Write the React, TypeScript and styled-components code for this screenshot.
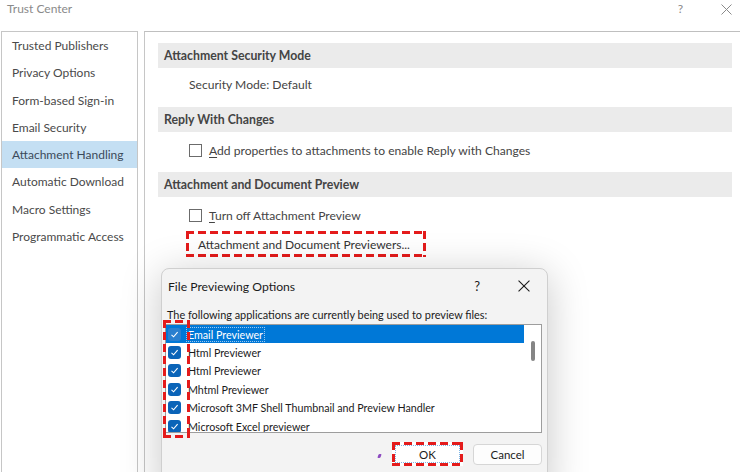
import React from 'react'
import styled, { createGlobalStyle, css } from 'styled-components'

const GlobalStyle = createGlobalStyle`
  html, body {
    margin: 0;
    height: 100%;
    overflow: hidden;
    background: #ffffff;
  }
  body {
    font-family: Lato, "Open Sans", "Liberation Sans", sans-serif;
    color: #444444;
  }
  * { box-sizing: border-box; }
`

// red annotation frame, drawn as long dashes like the marker in the screenshot
const redDashes = css`
  background-image:
    repeating-linear-gradient(90deg, #e41b1b 0 8px, transparent 8px 12px),
    repeating-linear-gradient(90deg, #e41b1b 0 8px, transparent 8px 12px),
    repeating-linear-gradient(180deg, #e41b1b 0 8px, transparent 8px 12px),
    repeating-linear-gradient(180deg, #e41b1b 0 8px, transparent 8px 12px);
  background-size: 100% 3px, 100% 3px, 3px 100%, 3px 100%;
  background-position: left top, left bottom, left top, right top;
  background-repeat: no-repeat;
`

const Window = styled.div`
  position: relative;
  width: 740px;
  height: 472px;
  overflow: hidden;
  display: flex;
  flex-direction: column;
`

const TitleBar = styled.div`
  height: 31px;
  display: flex;
  align-items: flex-start;
  padding: 0 8px 0 7px;
  line-height: 18px;
  font-size: 12px;
  color: #8a8a8a;
`

const TitleText = styled.span`
  flex: 1;
`

const TitleIcons = styled.div`
  display: flex;
  gap: 38px;
  align-items: center;
  height: 18px;
  color: #8a8a8a;
  font-size: 12px;
`

const Body = styled.div`
  flex: 1;
  display: flex;
  gap: 6px;
  padding-left: 1px;
  min-height: 0;
`

const Nav = styled.ul`
  width: 137px;
  margin: 0;
  padding: 0;
  list-style: none;
  border: 1px solid #c6c6c6;
  border-bottom: none;
`

const NavItem = styled.li<{ $active?: boolean }>`
  height: 27.3px;
  line-height: 27.3px;
  padding-left: 10px;
  font-size: 12px;
  white-space: nowrap;
  color: ${p => (p.$active ? '#3b4a5a' : '#4a4a4a')};
  background: ${p => (p.$active ? '#c4dff3' : 'transparent')};
`

const Panel = styled.div`
  flex: 1;
  border-top: 1px solid #bfbfbf;
  border-left: 1px solid #c6c6c6;
  padding: 11px 8px 0 13px;
`

const SectionBar = styled.div`
  height: 25px;
  line-height: 25px;
  padding-left: 6px;
  background: #ebebeb;
  font-size: 12.3px;
  font-weight: 700;
  color: #444444;
`

const SectionBody = styled.div`
  padding: 10px 0 15px 31px;
  display: flex;
  flex-direction: column;
  align-items: flex-start;
  gap: 10px;
`

const InfoText = styled.div`
  font-size: 12.1px;
  line-height: 14px;
  color: #444444;
`

const CheckRow = styled.label`
  display: flex;
  align-items: center;
  gap: 7px;
  height: 14px;
  margin-top: 1px;
  font-size: 12.1px;
  color: #444444;
`

const Box = styled.span`
  width: 13px;
  height: 13px;
  border: 1px solid #6b6b6b;
  background: #ffffff;
  display: inline-block;
`

const Key = styled.span`
  text-decoration: underline;
  text-underline-offset: 2px;
`

const AnnotatedButton = styled.div`
  ${redDashes};
  margin-left: -3px;
  margin-top: -1px;
  height: 26px;
  padding: 0 16px 0 12px;
  display: flex;
  align-items: center;
  font-size: 12px;
  color: #333333;
`

/* dialog overlay */
const Dialog = styled.div`
  position: absolute;
  left: 161px;
  top: 268px;
  width: 387px;
  height: 230px;
  background: #f3f3f3;
  border: 1px solid #cfcfcf;
  border-radius: 8px;
  box-shadow: 0 6px 40px rgba(0, 0, 0, 0.22);
  display: flex;
  flex-direction: column;
`

const DialogHeader = styled.div`
  height: 34px;
  display: flex;
  align-items: center;
  padding: 0 17px 0 6px;
  font-size: 12.2px;
  color: #1b1b1b;
`

const DialogTitle = styled.span`
  flex: 1;
`

const DialogIcons = styled.div`
  display: flex;
  align-items: center;
  gap: 38px;
  color: #1b1b1b;
  font-size: 13px;
`

const Prompt = styled.div`
  padding: 5px 0 0 5px;
  height: 21px;
  font-size: 10.9px;
  line-height: 14px;
  color: #1b1b1b;
`

const ListBox = styled.div`
  margin: 0 5px 0 3px;
  height: 109px;
  border: 1px solid #9d9d9d;
  background: #ffffff;
  display: flex;
  overflow: hidden;
`

const Rows = styled.div`
  flex: 1;
  display: flex;
  flex-direction: column;
`

const Row = styled.div<{ $selected?: boolean }>`
  flex: none;
  height: 18.4px;
  display: flex;
  align-items: center;
  gap: 6px;
  padding-left: 2px;
  font-size: 10.7px;
  white-space: nowrap;
  color: ${p => (p.$selected ? '#ffffff' : '#1b1b1b')};
  background: ${p => (p.$selected ? '#0078d7' : 'transparent')};
`

const RowLabel = styled.span<{ $focus?: boolean }>`
  padding: 0 1px;
  outline: ${p => (p.$focus ? '1px dotted #9cc8f0' : 'none')};
`

const BlueBox = styled.span<{ $faded?: boolean }>`
  width: 13px;
  height: 13px;
  border-radius: 3px;
  background: ${p => (p.$faded ? '#2a7fcf' : '#0a64b8')};
  display: inline-flex;
  align-items: center;
  justify-content: center;
  flex: none;
`

const ScrollTrack = styled.div`
  width: 17px;
  display: flex;
  justify-content: center;
  padding-top: 16px;
`

const Thumb = styled.div`
  width: 4px;
  height: 20px;
  border-radius: 2px;
  background: #858585;
`

const Footer = styled.div`
  display: flex;
  justify-content: flex-end;
  align-items: center;
  gap: 10px;
  padding: 8px 5px 0 0;
  height: 34px;
`

const Cursor = styled.span`
  width: 3px;
  height: 4px;
  background: #8d4bc0;
  border-radius: 1px;
  margin-right: 1px;
  transform: translateY(2px) skewX(-20deg);
`

const OkButton = styled.div`
  ${redDashes};
  background-color: #ffffff;
  width: 71px;
  height: 24px;
  display: flex;
  align-items: center;
  justify-content: center;
  font-size: 11.5px;
  color: #1b1b1b;
  outline: 1px dotted #7fb6e6;
  outline-offset: -4px;
`

const CancelButton = styled.div`
  width: 69px;
  height: 21px;
  background: #fdfdfd;
  border: 1px solid #d6d6d6;
  border-radius: 4px;
  display: flex;
  align-items: center;
  justify-content: center;
  font-size: 11.5px;
  color: #1b1b1b;
`

const CheckAnnotation = styled.div`
  ${redDashes};
  position: absolute;
  left: 1px;
  top: 51px;
  width: 27px;
  height: 118px;
  pointer-events: none;
`

const Grip = styled.svg`
  position: absolute;
  right: 2px;
  bottom: 2px;
`

const navItems = [
  'Trusted Publishers',
  'Privacy Options',
  'Form-based Sign-in',
  'Email Security',
  'Attachment Handling',
  'Automatic Download',
  'Macro Settings',
  'Programmatic Access',
]

const previewers = [
  'Email Previewer',
  'Html Previewer',
  'Html Previewer',
  'Mhtml Previewer',
  'Microsoft 3MF Shell Thumbnail and Preview Handler',
  'Microsoft Excel previewer',
]

const CloseX = ({ size = 11, color = '#8a8a8a' }: { size?: number; color?: string }) => (
  <svg width={size} height={size} viewBox="0 0 11 11">
    <path d="M0.5 0.5 L10.5 10.5 M10.5 0.5 L0.5 10.5" stroke={color} strokeWidth={1} fill="none" />
  </svg>
)

const Tick = () => (
  <svg width="9" height="9" viewBox="0 0 9 9">
    <path d="M1.5 4.8 L3.6 6.8 L7.6 2.2" stroke="#ffffff" strokeWidth="1.1" fill="none" />
  </svg>
)

export default function App() {
  return (
    <>
      <GlobalStyle />
      <Window>
        <TitleBar>
          <TitleText>Trust Center</TitleText>
          <TitleIcons>
            <span>?</span>
            <CloseX />
          </TitleIcons>
        </TitleBar>
        <Body>
          <Nav>
            {navItems.map(item => (
              <NavItem key={item} $active={item === 'Attachment Handling'}>
                {item}
              </NavItem>
            ))}
          </Nav>
          <Panel>
            <SectionBar>Attachment Security Mode</SectionBar>
            <SectionBody>
              <InfoText>Security Mode: Default</InfoText>
            </SectionBody>
            <SectionBar>Reply With Changes</SectionBar>
            <SectionBody>
              <CheckRow>
                <Box />
                <span>
                  <Key>A</Key>dd properties to attachments to enable Reply with Changes
                </span>
              </CheckRow>
            </SectionBody>
            <SectionBar>Attachment and Document Preview</SectionBar>
            <SectionBody>
              <CheckRow>
                <Box />
                <span>
                  <Key>T</Key>urn off Attachment Preview
                </span>
              </CheckRow>
              <AnnotatedButton>Attachment and Document Previewers...</AnnotatedButton>
            </SectionBody>
          </Panel>
        </Body>

        <Dialog>
          <DialogHeader>
            <DialogTitle>File Previewing Options</DialogTitle>
            <DialogIcons>
              <span>?</span>
              <CloseX size={12} color="#1b1b1b" />
            </DialogIcons>
          </DialogHeader>
          <Prompt>The following applications are currently being used to preview files:</Prompt>
          <ListBox>
            <Rows>
              {previewers.map((name, i) => (
                <Row key={i} $selected={i === 0}>
                  <BlueBox $faded={i === 0}>
                    <Tick />
                  </BlueBox>
                  <RowLabel $focus={i === 0}>{name}</RowLabel>
                </Row>
              ))}
            </Rows>
            <ScrollTrack>
              <Thumb />
            </ScrollTrack>
          </ListBox>
          <Footer>
            <Cursor />
            <OkButton>OK</OkButton>
            <CancelButton>Cancel</CancelButton>
          </Footer>
          <CheckAnnotation />
          <Grip width="8" height="8" viewBox="0 0 8 8">
            <rect x="6" y="2" width="1" height="1" fill="#9a9a9a" />
            <rect x="4" y="4" width="1" height="1" fill="#9a9a9a" />
            <rect x="6" y="4" width="1" height="1" fill="#9a9a9a" />
            <rect x="2" y="6" width="1" height="1" fill="#9a9a9a" />
            <rect x="4" y="6" width="1" height="1" fill="#9a9a9a" />
            <rect x="6" y="6" width="1" height="1" fill="#9a9a9a" />
          </Grip>
        </Dialog>
      </Window>
    </>
  )
}
